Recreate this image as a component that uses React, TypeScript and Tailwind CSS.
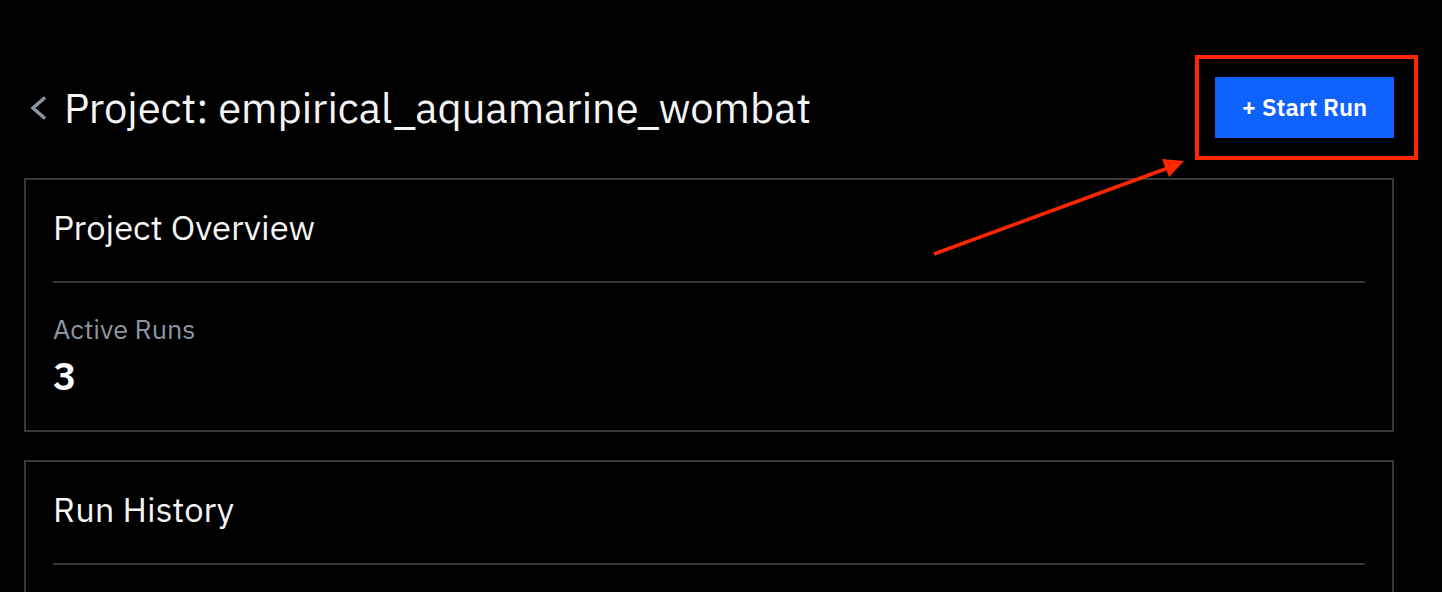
const font = { fontFamily: '"IBM Plex Sans", "Noto Sans", sans-serif' };

function Card({ title, children }: { title: string; children?: React.ReactNode }) {
  return (
    <section className="border-2 border-[#393939] px-[27px]">
      <h2 className="pt-[28px] pb-[33px] text-[34.6px] leading-[40px] text-[#f4f4f4]">{title}</h2>
      <div className="h-[2px] bg-[#393939]" />
      {children}
    </section>
  );
}

export default function App() {
  return (
    <div className="relative h-[592px] w-full overflow-hidden bg-black" style={font}>
      <div className="pt-[77px] pl-6 pr-12">
        <header className="flex h-[61px] items-center justify-between">
          <div className="flex items-center">
            <svg className="ml-[5px] mr-[15px]" width="20" height="26" viewBox="0 0 20 26" fill="none">
              <path d="M16 2.5 L4 13 L16 23.5" stroke="#8d95a0" strokeWidth="3.4" strokeLinecap="butt" strokeLinejoin="miter" />
            </svg>
            <h1 className="-mt-[2px] text-[41.7px] leading-[48px] text-[#f4f4f4]">Project: empirical_aquamarine_wombat</h1>
          </div>
          <button className="h-[61px] w-[179px] bg-[#0f62fe] pb-[2px] text-[24px] font-semibold text-white">
            + Start Run
          </button>
        </header>

        <div className="mt-[40px] flex flex-col gap-[28px]">
          <Card title="Project Overview">
            <div className="pt-[30px] pb-[34px]">
              <div className="text-[27px] leading-[32px] text-[#8d95a0]">Active Runs</div>
              <div className="mt-[11px] text-[39px] font-semibold leading-[40px] text-white">3</div>
            </div>
          </Card>
          <Card title="Run History">
            <div className="h-[200px]" />
          </Card>
        </div>
      </div>

      {/* annotation overlay */}
      <svg className="pointer-events-none absolute inset-0" width="1442" height="592">
        <rect x="1197" y="57" width="219" height="101" fill="none" stroke="#ff2600" strokeWidth="4" />
        <line x1="934" y1="254" x2="1168" y2="168" stroke="#ff2600" strokeWidth="3.5" />
        <polygon points="1184,161 1162,159 1169,177" fill="#ff2600" />
      </svg>
    </div>
  );
}
